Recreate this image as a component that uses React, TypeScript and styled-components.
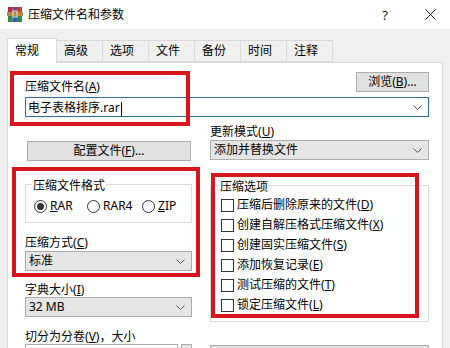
import React from "react";
import styled, { createGlobalStyle } from "styled-components";

const GlobalStyle = createGlobalStyle`
  html, body {
    margin: 0;
    padding: 0;
    background: #f0f0f0;
  }
  body {
    font-family: "Noto Sans", "Noto Sans CJK SC", sans-serif;
    font-size: 12px;
    color: #000;
  }
`;

const Window = styled.div`
  position: relative;
  width: 450px;
  height: 348px;
  overflow: hidden;
  background: #f0f0f0;
`;

const TitleBar = styled.div`
  height: 29px;
  background: #fff;
  display: flex;
  align-items: center;
  padding-left: 7px;
`;

const Title = styled.div`
  margin-left: 5px;
  flex: 1;
  font-size: 12px;
  line-height: 14px;
`;

const HelpButton = styled.div`
  width: 30px;
  text-align: center;
  font-size: 13px;
  color: #222;
`;

const CloseButton = styled.div`
  width: 39px;
  margin-left: 11px;
  display: flex;
  justify-content: center;
`;

const TabBar = styled.div`
  display: flex;
  align-items: flex-end;
  margin-top: 9px;
  padding-left: 7px;
  height: 24px;
`;

const Tab = styled.div<{ $active?: boolean }>`
  position: relative;
  box-sizing: border-box;
  width: ${(p) => (p.$active ? 50 : 47)}px;
  height: ${(p) => (p.$active ? 25 : 22)}px;
  margin-bottom: ${(p) => (p.$active ? -1 : 0)}px;
  margin-left: -1px;
  padding-left: 7px;
  border: 1px solid #d9d9d9;
  border-bottom: ${(p) => (p.$active ? "none" : "1px solid #d9d9d9")};
  background: ${(p) => (p.$active ? "#fff" : "#f0f0f0")};
  z-index: ${(p) => (p.$active ? 1 : 0)};
  display: flex;
  align-items: center;
  line-height: 14px;
  &:first-child {
    margin-left: 0;
  }
`;

const Panel = styled.div`
  margin: 0 7px;
  height: 300px;
  box-sizing: border-box;
  border: 1px solid #d9d9d9;
  background: #fff;
  padding: 9px 13px 0 17px;
`;

const TopRow = styled.div`
  display: flex;
  justify-content: space-between;
  align-items: flex-end;
  height: 20px;
`;

const Label = styled.div<{ $top?: number }>`
  line-height: 14px;
  margin-top: ${(p) => p.$top ?? 0}px;
  white-space: nowrap;
`;

const TopLabel = styled(Label)`
  margin-bottom: -2px;
`;

const Button = styled.div<{ $w?: number; $top?: number }>`
  box-sizing: border-box;
  width: ${(p) => (p.$w ? `${p.$w}px` : "auto")};
  height: 20px;
  margin-top: ${(p) => p.$top ?? 0}px;
  background: #e1e1e1;
  border: 1px solid #adadad;
  display: flex;
  align-items: center;
  justify-content: center;
  line-height: 14px;
`;

const WideButton = styled(Button)`
  margin-left: 2px;
  margin-right: 1px;
`;

const BottomButton = styled(Button)`
  height: 22px;
`;

const NameInput = styled.div`
  box-sizing: border-box;
  height: 20px;
  margin-top: 5px;
  border: 1px solid #2b6ea3;
  background: #fff;
  display: flex;
  align-items: center;
  justify-content: space-between;
  padding: 0 6px 0 2px;
`;

const Caret = styled.span`
  display: inline-block;
  width: 1px;
  height: 14px;
  background: #000;
  vertical-align: middle;
  margin-left: 1px;
`;

const Columns = styled.div`
  display: grid;
  grid-template-columns: 167px 219px;
  column-gap: 18px;
`;

const Column = styled.div`
  display: flex;
  flex-direction: column;
`;

const Select = styled.div<{ $top?: number; $white?: boolean; $grow?: boolean }>`
  box-sizing: border-box;
  height: ${(p) => (p.$white !== undefined ? 22 : 20)}px;
  margin-top: ${(p) => p.$top ?? 0}px;
  flex: ${(p) => (p.$grow ? 1 : "none")};
  background: ${(p) => (p.$white ? "#fff" : "#e5e5e5")};
  border: 1px solid #adadad;
  display: flex;
  align-items: center;
  justify-content: space-between;
  padding: 0 6px 0 3px;
  line-height: 14px;
  white-space: nowrap;
`;

const Group = styled.div<{ $top: number; $pad: string }>`
  margin-top: ${(p) => p.$top}px;
  padding: ${(p) => p.$pad};
  border: 1px solid #dcdcdc;
  display: flex;
  flex-direction: column;
`;

const Legend = styled.div`
  width: fit-content;
  margin: -6px 0 0 -2px;
  padding: 0 1px;
  background: #fff;
  line-height: 14px;
`;

const RadioRow = styled.div`
  display: flex;
  align-items: center;
  height: 14px;
  margin-top: 6px;
`;

const RadioItem = styled.div<{ $w: number }>`
  display: flex;
  align-items: center;
  width: ${(p) => p.$w}px;
  line-height: 14px;
`;

const RadioCircle = styled.span<{ $checked?: boolean }>`
  box-sizing: border-box;
  width: 13px;
  height: 13px;
  border-radius: 50%;
  border: 1px solid #333;
  margin-right: 3px;
  display: flex;
  align-items: center;
  justify-content: center;
  &::after {
    content: "";
    width: 7px;
    height: 7px;
    border-radius: 50%;
    background: ${(p) => (p.$checked ? "#333" : "transparent")};
  }
`;

const CheckList = styled.div`
  margin-top: 1px;
`;

const CheckRow = styled.div`
  display: flex;
  align-items: center;
  height: 20px;
  line-height: 14px;
  white-space: nowrap;
`;

const CheckBox = styled.span`
  box-sizing: border-box;
  width: 13px;
  height: 13px;
  border: 1px solid #333;
  background: #fff;
  margin-right: 3px;
`;

const SplitRow = styled.div`
  display: flex;
  gap: 3px;
`;

const Mark = styled.div<{ $x: number; $y: number; $w: number; $h: number }>`
  position: absolute;
  left: ${(p) => p.$x}px;
  top: ${(p) => p.$y}px;
  width: ${(p) => p.$w}px;
  height: ${(p) => p.$h}px;
  box-sizing: border-box;
  border: 4px solid #d8141c;
  pointer-events: none;
`;

const Chevron = () => (
  <svg width="9" height="5" viewBox="0 0 9 5">
    <polyline points="0.5,0.5 4.5,4.5 8.5,0.5" fill="none" stroke="#555" strokeWidth="1" />
  </svg>
);

const AppIcon = () => (
  <svg width="16" height="15" viewBox="0 0 16 15">
    <rect x="1" y="0" width="4.5" height="7" fill="#b8292f" />
    <rect x="5.5" y="0" width="4.5" height="7" fill="#7c3a8f" />
    <rect x="10" y="0" width="5" height="7" fill="#c0452a" />
    <rect x="1" y="7" width="4.5" height="8" fill="#3a8a3e" />
    <rect x="5.5" y="7" width="4.5" height="8" fill="#2f5fb0" />
    <rect x="10" y="7" width="5" height="8" fill="#2d8a52" />
    <rect x="0" y="5" width="16" height="4" fill="#b08a4a" />
    <rect x="6" y="4" width="4" height="6" fill="none" stroke="#f4e6c0" strokeWidth="1" />
  </svg>
);

const CloseIcon = () => (
  <svg width="11" height="11" viewBox="0 0 11 11">
    <path d="M0.5 0.5 L10.5 10.5 M10.5 0.5 L0.5 10.5" stroke="#222" strokeWidth="1" />
  </svg>
);

const tabs = ["常规", "高级", "选项", "文件", "备份", "时间", "注释"];

const options: [string, string][] = [
  ["压缩后删除原来的文件", "D"],
  ["创建自解压格式压缩文件", "X"],
  ["创建固实压缩文件", "S"],
  ["添加恢复记录", "E"],
  ["测试压缩的文件", "T"],
  ["锁定压缩文件", "L"],
];

const Key = ({ k }: { k: string }) => (
  <>
    (<u>{k}</u>)
  </>
);

export default function App() {
  return (
    <Window>
      <GlobalStyle />
      <TitleBar>
        <AppIcon />
        <Title>压缩文件名和参数</Title>
        <HelpButton>?</HelpButton>
        <CloseButton>
          <CloseIcon />
        </CloseButton>
      </TitleBar>

      <TabBar>
        {tabs.map((t, i) => (
          <Tab key={t} $active={i === 0}>
            {t}
          </Tab>
        ))}
      </TabBar>

      <Panel>
        <TopRow>
          <TopLabel>
            压缩文件名<Key k="A" />
          </TopLabel>
          <Button $w={73}>
            浏览<Key k="B" />...
          </Button>
        </TopRow>
        <NameInput>
          <span>
            电子表格排序.rar
            <Caret />
          </span>
          <Chevron />
        </NameInput>

        <Columns>
          <Column>
            <WideButton $top={24}>
              配置文件<Key k="F" />...
            </WideButton>
            <Group $top={23} $pad="0 8px 9px 8px">
              <Legend>压缩文件格式</Legend>
              <RadioRow>
                <RadioItem $w={53}>
                  <RadioCircle $checked />
                  <span>
                    <u>R</u>AR
                  </span>
                </RadioItem>
                <RadioItem $w={55}>
                  <RadioCircle />
                  <span>RAR4</span>
                </RadioItem>
                <RadioItem $w={40}>
                  <RadioCircle />
                  <span>
                    <u>Z</u>IP
                  </span>
                </RadioItem>
              </RadioRow>
            </Group>
            <Label $top={13}>
              压缩方式<Key k="C" />
            </Label>
            <Select $top={1}>
              标准
              <Chevron />
            </Select>
            <Label $top={12}>
              字典大小<Key k="I" />
            </Label>
            <Select>
              32 MB
              <Chevron />
            </Select>
            <Label $top={13}>
              切分为分卷<Key k="V" />，大小
            </Label>
            <SplitRow>
              <Select $white $grow />
              <Select $white={false} />
            </SplitRow>
          </Column>

          <Column>
            <Label $top={8}>
              更新模式<Key k="U" />
            </Label>
            <Select $top={1}>
              添加并替换文件
              <Chevron />
            </Select>
            <Group $top={25} $pad="0 8px 6px 10px">
              <Legend>压缩选项</Legend>
              <CheckList>
                {options.map(([text, k]) => (
                  <CheckRow key={text}>
                    <CheckBox />
                    <span>
                      {text}
                      <Key k={k} />
                    </span>
                  </CheckRow>
                ))}
              </CheckList>
            </Group>
            <BottomButton $top={23} />
          </Column>
        </Columns>
      </Panel>

      <Mark $x={10} $y={71} $w={180} $h={55} />
      <Mark $x={12} $y={167} $w={188} $h={110} />
      <Mark $x={211} $y={173} $w={208} $h={145} />
    </Window>
  );
}
